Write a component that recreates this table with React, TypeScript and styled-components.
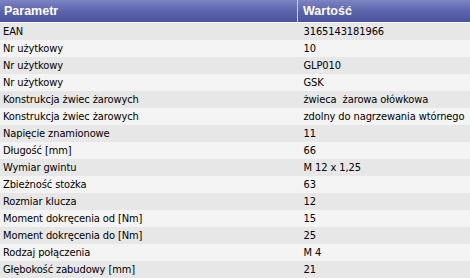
import styled, { createGlobalStyle } from 'styled-components';

const GlobalStyle = createGlobalStyle`
  html, body {
    margin: 0;
    padding: 0;
    background: #ffffff;
  }
`

const rows: [string, string][] = [
  ['EAN', '3165143181966'],
  ['Nr użytkowy', '10'],
  ['Nr użytkowy', 'GLP010'],
  ['Nr użytkowy', 'GSK'],
  ['Konstrukcja żwiec żarowych', 'żwieca  żarowa ołówkowa'],
  ['Konstrukcja żwiec żarowych', 'zdolny do nagrzewania wtórnego'],
  ['Napięcie znamionowe', '11'],
  ['Długość [mm]', '66'],
  ['Wymiar gwintu', 'M 12 x 1,25'],
  ['Zbieżność stożka', '63'],
  ['Rozmiar klucza', '12'],
  ['Moment dokręcenia od [Nm]', '15'],
  ['Moment dokręcenia do [Nm]', '25'],
  ['Rodzaj połączenia', 'M 4'],
  ['Głębokość zabudowy [mm]', '21'],
]

const App = () => {
  return (
    <>
      <GlobalStyle />
      <Table>
        <thead>
          <tr>
            <HeadCell>Parametr</HeadCell>
            <HeadCell $divider>Wartość</HeadCell>
          </tr>
        </thead>
        <tbody>
          {rows.map(([name, value], i) => (
            <Row key={i} $odd={i % 2 === 0}>
              <Cell>{name}</Cell>
              <Cell $value>{value}</Cell>
            </Row>
          ))}
        </tbody>
      </Table>
    </>
  )
}

export default App;

const Table = styled.table`
  width: 470px;
  border-collapse: collapse;
  table-layout: fixed;
  font-family: "DejaVu Sans Condensed", "DejaVu Sans", sans-serif;
  font-size: 11px;
  color: #000;
`
const HeadCell = styled.th<{ $divider?: boolean }>`
  height: 22px;
  padding: 0 0 0 ${p => p.$divider ? '5px' : '4px'};
  width: ${p => p.$divider ? 'auto' : '293px'};
  text-align: left;
  font-family: "Liberation Sans", Arial, sans-serif;
  font-size: 12.5px;
  font-weight: bold;
  color: #ffffff;
  background: linear-gradient(to bottom, #7c84c4 0%, #5d65ac 50%, #4a5299 100%);
  border-left: ${p => p.$divider ? '1px solid #c8cce8' : 'none'};
  border-bottom: 1px solid #ffffff;
`
const Row = styled.tr<{ $odd: boolean }>`
  height: 17px;
  background: ${p => p.$odd ? '#e7e7e7' : '#f4f4f4'};
`
const Cell = styled.td<{ $value?: boolean }>`
  height: 17px;
  padding: 0 0 0 ${p => p.$value ? '6px' : '3px'};
  white-space: pre;
  line-height: 16px;
  font-size: 11px;
  letter-spacing: -0.1px;
`
